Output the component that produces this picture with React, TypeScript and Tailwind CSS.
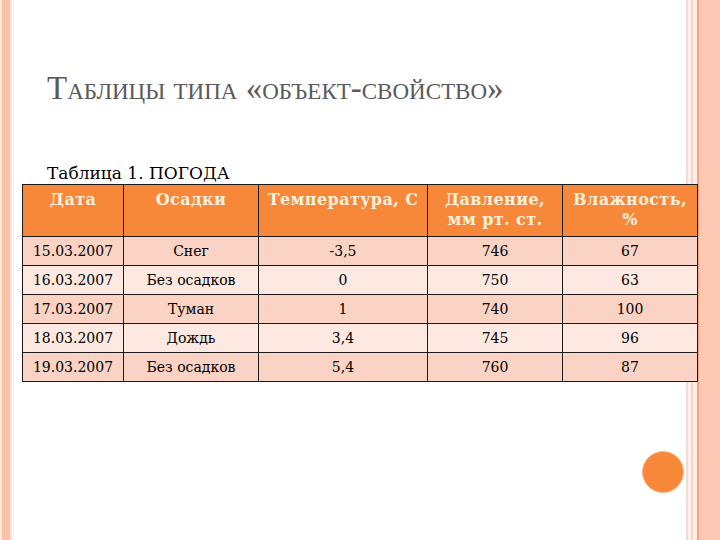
import React from 'react';

type Row = {
    date: string;
    precip: string;
    temp: string;
    pressure: string;
    humidity: string;
};

const rows: Row[] = [
    { date: '15.03.2007', precip: 'Снег', temp: '-3,5', pressure: '746', humidity: '67' },
    { date: '16.03.2007', precip: 'Без осадков', temp: '0', pressure: '750', humidity: '63' },
    { date: '17.03.2007', precip: 'Туман', temp: '1', pressure: '740', humidity: '100' },
    { date: '18.03.2007', precip: 'Дождь', temp: '3,4', pressure: '745', humidity: '96' },
    { date: '19.03.2007', precip: 'Без осадков', temp: '5,4', pressure: '760', humidity: '87' },
];

export default function App() {
    return (
        <div className="flex h-[540px] w-[720px] overflow-hidden bg-white">
            {/* left edge stripes */}
            <div className="flex h-full shrink-0">
                <div className="w-[2px] bg-[#fde8de]" />
                <div className="w-[8px] bg-[#fcc1a7]" />
                <div className="w-[2px] bg-[#fde3d7]" />
                <div className="w-[1px] bg-white" />
                <div className="w-[1px] bg-[#f3efe4]" />
            </div>

            {/* slide body */}
            <div className="flex min-w-0 flex-1 flex-col font-['DejaVu_Serif','Liberation_Serif',serif]">
                <h1 className="mt-[70px] pl-[33px] font-['Liberation_Serif',serif] text-[33px] leading-[36px] font-normal text-[#5a5a5a] [font-variant:small-caps]">
                    Таблицы типа «объект-свойство»
                </h1>

                <div className="mt-[56px] pl-[33px] text-[17px] leading-[22px] text-black">
                    Таблица 1. ПОГОДА
                </div>

                <table className="relative z-10 ml-[8px] w-[675px] table-fixed border-collapse font-['DejaVu_Serif','Liberation_Serif',serif]">
                    <colgroup>
                        <col className="w-[101px]" />
                        <col className="w-[135px]" />
                        <col className="w-[169px]" />
                        <col className="w-[135px]" />
                        <col className="w-[135px]" />
                    </colgroup>
                    <thead>
                        <tr className="h-[52px] bg-[#f7883a] text-[16px] leading-[20px] font-bold tracking-[0.4px] text-[#fdf1dc]">
                            <th className="border border-[#1a1a1a] px-0 pt-[5px] align-top font-bold">Дата</th>
                            <th className="border border-[#1a1a1a] px-0 pt-[5px] align-top font-bold">Осадки</th>
                            <th className="border border-[#1a1a1a] px-0 pt-[5px] align-top font-bold">Температура, С</th>
                            <th className="border border-[#1a1a1a] px-0 pt-[5px] align-top font-bold">
                                Давление,
                                <br />
                                мм рт. ст.
                            </th>
                            <th className="border border-[#1a1a1a] px-0 pt-[5px] align-top font-bold">
                                Влажность,
                                <br />%
                            </th>
                        </tr>
                    </thead>
                    <tbody>
                        {rows.map((r, i) => (
                            <tr
                                key={r.date}
                                className={`h-[29px] text-center text-[14px] leading-[18px] text-black ${
                                    i % 2 === 0 ? 'bg-[#fad3c5]' : 'bg-[#fde9e1]'
                                }`}
                            >
                                <td className="border border-[#1a1a1a] px-0">{r.date}</td>
                                <td className="border border-[#1a1a1a] px-0">{r.precip}</td>
                                <td className="border border-[#1a1a1a] px-0">{r.temp}</td>
                                <td className="border border-[#1a1a1a] px-0">{r.pressure}</td>
                                <td className="border border-[#1a1a1a] px-0">{r.humidity}</td>
                            </tr>
                        ))}
                    </tbody>
                </table>

                {/* orange bullet */}
                <div className="mt-[69px] flex justify-end pr-[2px]">
                    <div className="h-[42px] w-[42px] rounded-full border border-[#fbb58a] bg-[#f7883a]" />
                </div>
            </div>

            {/* right edge stripes */}
            <div className="flex h-full shrink-0">
                <div className="w-[2px] bg-[#efdcd2]" />
                <div className="w-[3px] bg-[#fdf1ea]" />
                <div className="w-[2px] bg-[#f6d6c8]" />
                <div className="w-[4px] bg-[#fdeee6]" />
                <div className="w-[2px] bg-[#f3a483]" />
                <div className="w-[21px] bg-[#fdc8b4]" />
            </div>
        </div>
    );
}
